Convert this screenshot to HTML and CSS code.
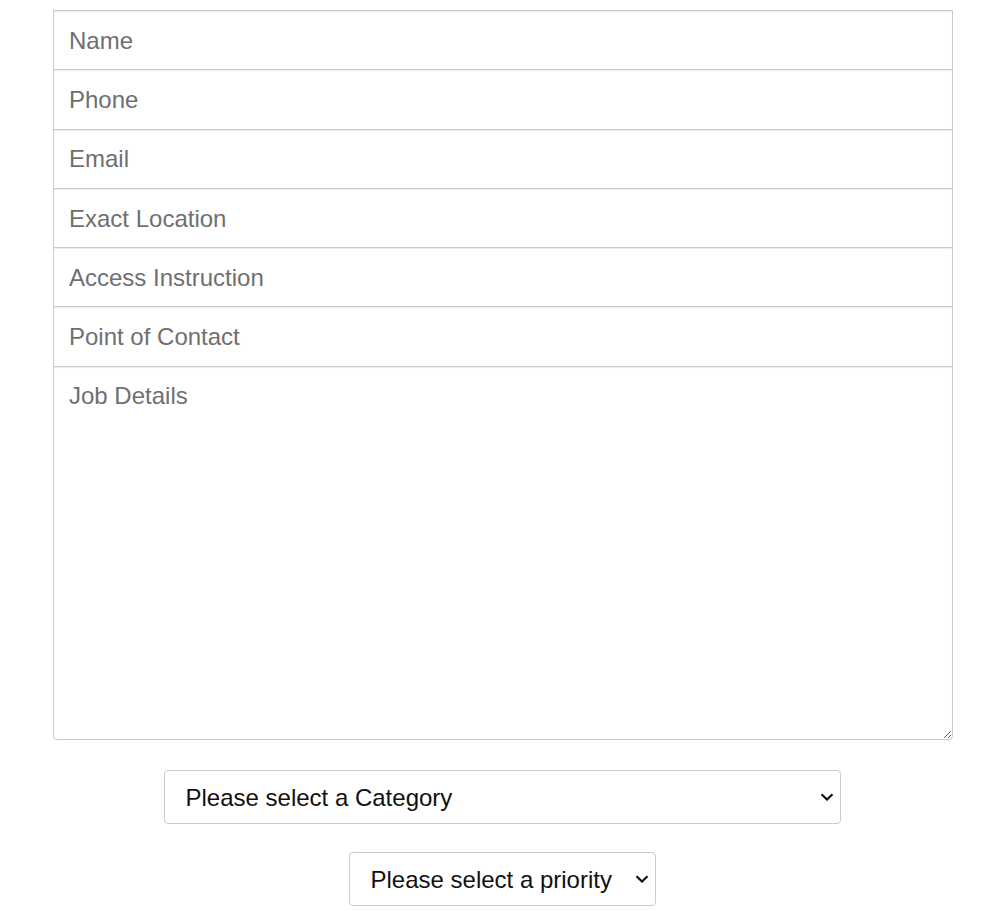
FILE: index.html
```html
<!DOCTYPE html>
<html lang="en">
<head>
  <meta charset="UTF-8">
  <title>New Job</title>
  <link rel="stylesheet" href="styles.css">
</head>
<body>

<form class="job-form">
  <div class="fields">
    <input class="field" type="text" placeholder="Name">
    <input class="field" type="text" placeholder="Phone">
    <input class="field" type="email" placeholder="Email">
    <input class="field" type="text" placeholder="Exact Location">
    <input class="field" type="text" placeholder="Access Instruction">
    <input class="field" type="text" placeholder="Point of Contact">
    <textarea class="field details" placeholder="Job Details"></textarea>
  </div>

  <select class="picker category">
    <option>Please select a Category</option>
    <option>Plumbing</option>
    <option>Electrical</option>
    <option>General</option>
  </select>

  <select class="picker priority">
    <option>Please select a priority</option>
    <option>Low</option>
    <option>Medium</option>
    <option>High</option>
  </select>
</form>

</body>
</html>
```

FILE: styles.css
```css
* {
  margin: 0;
  padding: 0;
  box-sizing: border-box;
}

body {
  font-family: "Liberation Sans", Arial, sans-serif;
  background-color: #fff;
}

.job-form {
  width: 900px;
  margin: 10px 0 0 53px;
  display: flex;
  flex-direction: column;
  align-items: center;
}

.fields {
  width: 100%;
  display: flex;
  flex-direction: column;
}

.field {
  display: block;
  width: 100%;
  height: 60.3px;
  padding: 1px 15px 0;
  border: 1px solid #ccc;
  border-radius: 0;
  box-shadow: inset 0 1px 1px rgba(0, 0, 0, .075);
  font: 400 24px/1.5 "Liberation Sans", Arial, sans-serif;
  color: #333;
  background-color: #fff;
  outline: none;
}

.field + .field {
  margin-top: -1px;
}

.field::placeholder {
  color: #6f6f72;
}

.details {
  height: 374px;
  padding: 11px 15px;
  border-radius: 0 0 4px 4px;
  resize: vertical;
}

/* select with a drawn chevron instead of the tiny native one */
.picker {
  -webkit-appearance: none;
  appearance: none;
  height: 54px;
  margin: 28px 2px 0 0;
  padding: 2px 42px 0 21px;
  border: 1px solid #ccc;
  border-radius: 4px;
  background-color: #fff;
  background-image: url("data:image/svg+xml,%3Csvg xmlns='http://www.w3.org/2000/svg' width='14' height='8' viewBox='0 0 14 8'%3E%3Cpath d='M1.5 1.2 7 6.5l5.5-5.3' fill='none' stroke='%23111' stroke-width='2.2'/%3E%3C/svg%3E");
  background-repeat: no-repeat;
  background-position: right 6px center;
  background-size: 14px 8px;
  font: 400 24px/1.5 "Liberation Sans", Arial, sans-serif;
  color: #111;
  outline: none;
}

.category {
  width: 677px;
  margin-top: 30px;
}
```
